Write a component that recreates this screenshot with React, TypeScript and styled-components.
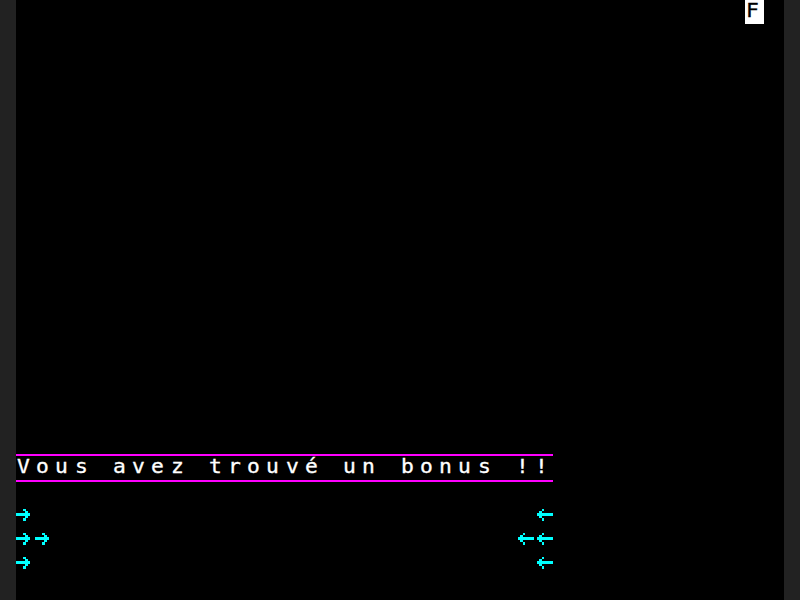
import React from "react";
import styled, { createGlobalStyle } from "styled-components";

const GlobalStyle = createGlobalStyle`
  html, body {
    margin: 0;
    padding: 0;
    background: #222222;
    overflow: hidden;
  }
`;

const Frame = styled.div`
  display: flex;
  width: 800px;
  height: 600px;
  background: #222222;
`;

const Gutter = styled.div`
  width: 16px;
  flex: none;
  background: #222222;
`;

const Screen = styled.div`
  width: 768px;
  height: 600px;
  flex: none;
  background: #000000;
  display: grid;
  grid-template-columns: repeat(40, 19.2px);
  grid-template-rows: repeat(25, 24px);
  font-family: "DejaVu Sans Mono", "Liberation Mono", monospace;
  font-size: 19px;
  line-height: 21px;
`;

const TextRow = styled.div<{ $row: number; $col: number; $span: number }>`
  grid-row: ${(p) => p.$row + 1};
  grid-column: ${(p) => p.$col + 1} / span ${(p) => p.$span};
  display: flex;
  height: 24px;
`;

const Banner = styled(TextRow)`
  box-shadow: 0 -2px 0 #ff00ff, 0 2px 0 #ff00ff;
  color: #ffffff;
`;

const Cell = styled.span<{ $fg?: string; $bg?: string }>`
  width: 19.2px;
  height: 24px;
  flex: none;
  color: ${(p) => p.$fg ?? "#ffffff"};
  background: ${(p) => p.$bg ?? "transparent"};
  white-space: pre;
  overflow: hidden;
  padding-left: 1px;
  box-sizing: border-box;
`;

const Glyph = styled.span`
  display: inline-block;
  transform: scaleX(1.12);
  transform-origin: left center;
  -webkit-text-stroke: 0.3px currentColor;
`;

const Arrow = ({ dir }: { dir: "right" | "left" }) =>
  dir === "right" ? (
    <svg width="19.2" height="24" viewBox="0 0 19.2 24" shapeRendering="crispEdges">
      <g fill="#00ffff">
        <rect x="7" y="5" width="3" height="2" />
        <rect x="9" y="7" width="3" height="2" />
        <rect x="0" y="9" width="14" height="3" />
        <rect x="9" y="12" width="3" height="2" />
        <rect x="7" y="14" width="3" height="3" />
      </g>
    </svg>
  ) : (
    <svg width="19.2" height="24" viewBox="0 0 19.2 24" shapeRendering="crispEdges">
      <g fill="#00ffff">
        <rect x="7.6" y="5" width="2" height="2" />
        <rect x="4.6" y="7" width="3" height="2" />
        <rect x="2.6" y="9" width="16.6" height="3" />
        <rect x="4.6" y="12" width="3" height="2" />
        <rect x="7.6" y="14" width="2" height="3" />
      </g>
    </svg>
  );

const ArrowRow = styled.div<{ $row: number; $col: number; $span: number }>`
  grid-row: ${(p) => p.$row + 1};
  grid-column: ${(p) => p.$col + 1} / span ${(p) => p.$span};
  display: flex;
  height: 24px;
`;

const message = "Vous avez trouvé un bonus !!";

export default function App() {
  return (
    <>
      <GlobalStyle />
      <Frame>
        <Gutter />
        <Screen>
          <TextRow $row={0} $col={38} $span={1}>
            <Cell $fg="#000000" $bg="#ffffff">
              <Glyph>F</Glyph>
            </Cell>
          </TextRow>
          <Banner $row={19} $col={0} $span={28}>
            {Array.from(message).map((ch, i) => (
              <Cell key={i}>
                <Glyph>{ch}</Glyph>
              </Cell>
            ))}
          </Banner>
          <ArrowRow $row={21} $col={0} $span={1}>
            <Arrow dir="right" />
          </ArrowRow>
          <ArrowRow $row={22} $col={0} $span={2}>
            <Arrow dir="right" />
            <Arrow dir="right" />
          </ArrowRow>
          <ArrowRow $row={23} $col={0} $span={1}>
            <Arrow dir="right" />
          </ArrowRow>
          <ArrowRow $row={21} $col={27} $span={1}>
            <Arrow dir="left" />
          </ArrowRow>
          <ArrowRow $row={22} $col={26} $span={2}>
            <Arrow dir="left" />
            <Arrow dir="left" />
          </ArrowRow>
          <ArrowRow $row={23} $col={27} $span={1}>
            <Arrow dir="left" />
          </ArrowRow>
        </Screen>
        <Gutter />
      </Frame>
    </>
  );
}
